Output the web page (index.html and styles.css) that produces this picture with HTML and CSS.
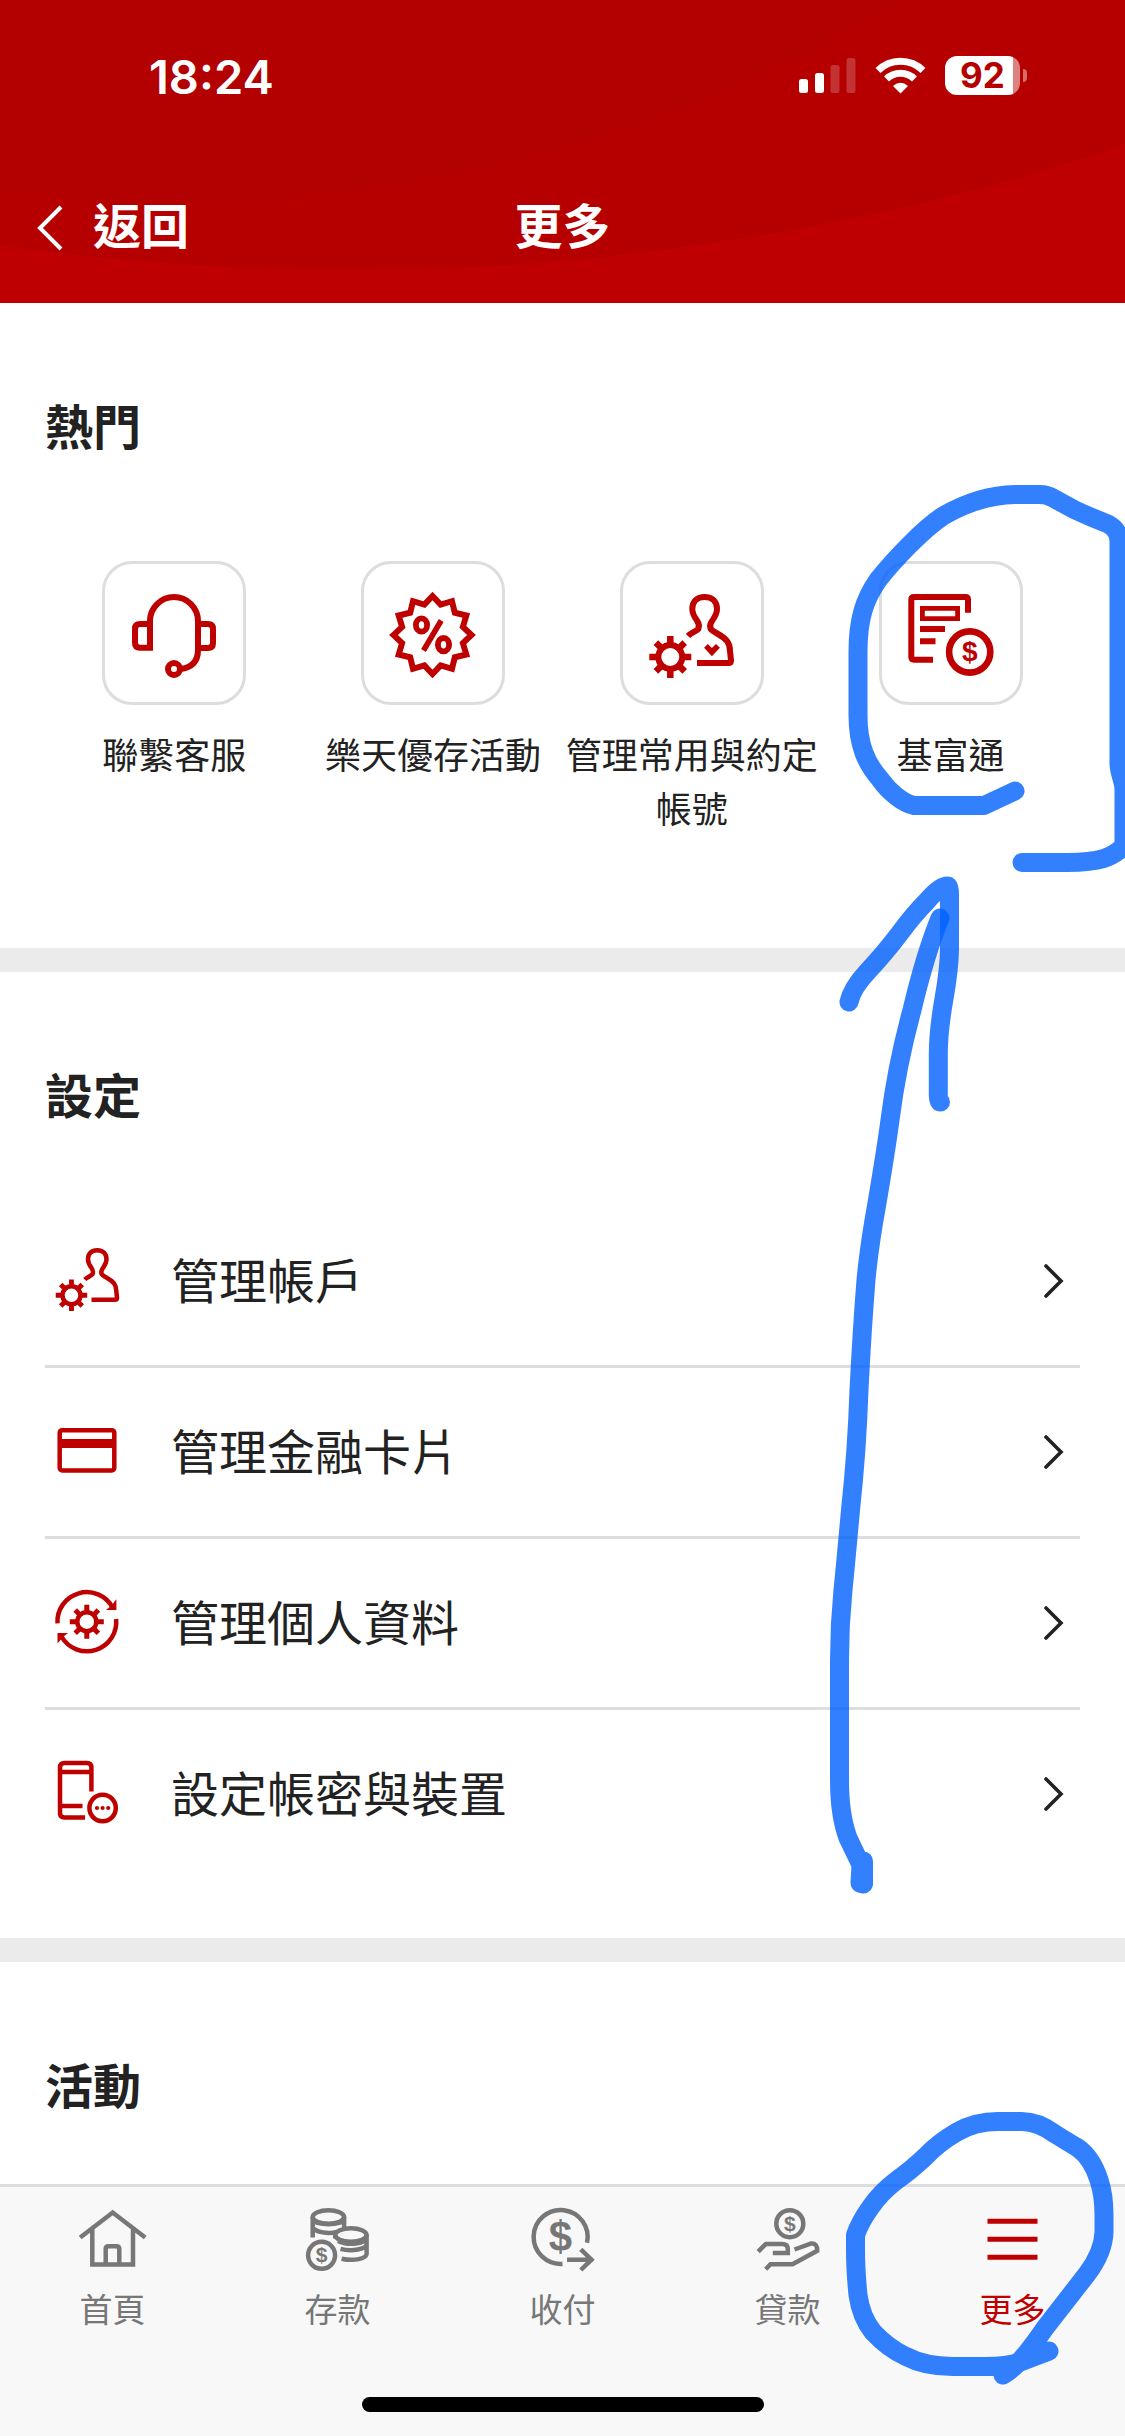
FILE: index.html
```html
<!DOCTYPE html>
<html lang="zh-Hant">
<head>
<meta charset="utf-8">
<title>更多</title>
<link rel="stylesheet" href="styles.css">
</head>
<body>
<svg class="defs" width="0" height="0">
  <symbol id="gear-teeth" viewBox="-22 -22 44 44">
    <path stroke-width="6.500" d="M0-14V-21M0 14V21M-14 0H-21M14 0H21M-9.9-9.9L-14.4-14.4M9.9 9.9L14.4 14.4M-9.9 9.9L-14.4 14.4M9.9-9.9L14.4-14.4"/>
    <circle r="12"/>
  </symbol>
  <symbol id="person-gear" viewBox="0 0 90 92">
    <path d="M41 48C44 45 49 43.500 51.300 41Q53 37 50 32.500C47 28.500 45.300 26 45.300 21C45.300 13.500 50 9 57.600 9S70 13.500 70 21C70 26 68 28.500 65.300 32.500Q62 37 63.700 41C67 45 74 46 80 53Q83 57 83 63L84 72.500Q84 75 81.500 75H50"/>
    <use href="#gear-teeth" x="1.300" y="47" width="44" height="44"/>
  </symbol>
</svg>

<div class="screen">
  <header class="header">
    <svg class="header-bg" viewBox="0 0 1125 303"><circle cx="350" cy="-2195" r="2465" fill="#b60000"/><circle cx="180" cy="-1200" r="1400" fill="#b30000"/></svg>
    <div class="status">
      <span class="time">18:24</span>
      <div class="status-icons">
        <svg width="57" height="36" viewBox="0 0 57 36" fill="#fff"><rect y="22" width="9" height="14" rx="2.500"/><rect x="16" y="16" width="9" height="20" rx="2.500"/><rect x="31.500" y="8" width="9" height="28" rx="2.500" opacity=".2"/><rect x="47.500" y="1" width="9" height="35" rx="2.500" opacity=".2"/></svg>
        <svg width="51" height="37" viewBox="0 0 51 37" fill="none" stroke="#fff" stroke-width="7"><path d="M3 13.500A32 32 0 0 1 48 13.500"/><path d="M11.500 22A20 20 0 0 1 39.500 22"/><path d="M25.500 36.500L18 29Q25.500 22.500 33 29Z" fill="#fff" stroke="none"/></svg>
        <div class="battery"><span class="battery-level">92</span></div>
      </div>
    </div>
    <nav class="nav">
      <a class="back"><svg width="26" height="46" viewBox="0 0 26 46" fill="none" stroke="#fff" stroke-width="4"><path d="M24 2L3 23L24 44"/></svg><span class="nav-text">返回</span></a>
      <h1 class="nav-text">更多</h1>
      <span></span>
    </nav>
  </header>

  <section class="section section-hot">
    <h2 class="title">熱門</h2>
    <div class="grid">
      <a class="tile"><span class="tile-box"><svg class="icon" viewBox="0 0 90 90"><path d="M21 59.800H11Q6 59.800 6 54.800V41Q6 36 11 36H21M21 62.800V33A24 24 0 0 1 69 33V62Q69 79 51 81M69 36H79Q84 36 84 41V55Q84 60 79 60H69"/><circle cx="45" cy="81" r="6"/></svg></span>聯繫客服</a>
      <a class="tile"><span class="tile-box"><svg class="icon" viewBox="-44.500 -47 90 90"><path d="M0-39L8.150-30.400L19.500-33.800L22.300-22.300L33.800-19.500L30.400-8.150L39 0L30.400 8.150L33.800 19.500L22.300 22.300L19.500 33.800L8.150 30.400L0 39L-8.150 30.400L-19.500 33.800L-22.300 22.300L-33.800 19.500L-30.400 8.150L-39 0L-30.400-8.150L-33.800-19.500L-22.300-22.300L-19.500-33.800L-8.150-30.400Z"/><g stroke-width="5.800"><ellipse cx="-11" cy="-10" rx="5.600" ry="6.700"/><ellipse cx="11" cy="9.700" rx="5.600" ry="6.700"/><path d="M8.700-14.500L-9 15.500" stroke-width="5.500"/></g></svg></span>樂天優存活動</a>
      <a class="tile"><span class="tile-box"><svg class="icon" viewBox="0 0 90 90"><use href="#person-gear" width="90" height="92"/><path class="solid" d="M57.100 59.800L60.800 56L64.900 60L69 56L72.900 59.800L64.900 68.300Z"/></svg></span>管理常用與約定帳號</a>
      <a class="tile"><span class="tile-box"><svg class="icon" viewBox="0 0 90 90"><path d="M62 24.700V11.500Q62 9 59.500 9H8Q5.300 9 5.300 11.700V69Q5.300 71.700 8 71.700H27M14 41H39M14 53.300H29.500"/><path d="M16.400 20.400H51.600V30.600H16.400Z" stroke-width="4.800"/><circle cx="63.700" cy="64" r="20.600" stroke-width="6.600"/><text x="63.700" y="73" font-size="28">$</text></svg></span>基富通</a>
    </div>
  </section>

  <section class="section section-settings">
    <h2 class="title">設定</h2>
    <div class="list">
      <a class="row"><svg class="icon" viewBox="-4 2 96 96" stroke-width="6"><use href="#person-gear" width="90" height="92"/></svg><span class="row-text">管理帳戶</span><svg class="chevron" viewBox="0 0 20 34"><path d="M2 2L17 17L2 32"/></svg></a>
      <a class="row"><svg class="icon thin" viewBox="0 0 72 72"><rect x="8.700" y="14.200" width="54.600" height="40.300" rx="2.500"/><path d="M8 27.500H64" stroke-width="9"/></svg><span class="row-text">管理金融卡片</span><svg class="chevron" viewBox="0 0 20 34"><path d="M2 2L17 17L2 32"/></svg></a>
      <a class="row"><svg class="icon thin" viewBox="0 0 72 72"><path d="M6.500 36.300A29.300 29.300 0 0 1 61.500 20.500M65.100 32A29.300 29.300 0 0 1 10.500 49.500"/><path class="solid" d="M65.400 12.300V23H55L60 19ZM6.500 56.500V46H17L12 50Z"/><circle cx="35.800" cy="34.700" r="9.500"/><path stroke-width="5" d="M35.800 17.700V24M35.800 45.500V51.700M18.800 34.700H25M46.500 34.700H52.800M24.200 23.100L29 27.900M42.600 41.500L47.400 46.300M24.200 46.300L29 41.500M42.600 27.900L47.400 23.100"/></svg><span class="row-text">管理個人資料</span><svg class="chevron" viewBox="0 0 20 34"><path d="M2 2L17 17L2 32"/></svg></a>
      <a class="row"><svg class="icon thin" viewBox="0 0 72 72"><path d="M40.400 33.500V9.500Q40.400 5 36 5H13.500Q9 5 9 9.500V55Q9 59.500 13.500 59.500H34M9 14H40M9 48H31.500"/><circle cx="51.600" cy="50" r="13.200"/><g class="solid"><circle cx="46" cy="50" r="2.100"/><circle cx="51.600" cy="50" r="2.100"/><circle cx="57.200" cy="50" r="2.100"/></g></svg><span class="row-text">設定帳密與裝置</span><svg class="chevron" viewBox="0 0 20 34"><path d="M2 2L17 17L2 32"/></svg></a>
    </div>
  </section>

  <section class="section section-events">
    <h2 class="title">活動</h2>
  </section>

  <footer class="tabbar">
    <div class="tabs">
      <a class="tab"><svg class="icon" viewBox="0 0 72 72"><path d="M3.200 33.500L35.700 8.500L68.200 33.500M15.300 25V60.500H56V25M28.700 60V45Q28.700 42.300 31.500 42.300H39.500Q42.300 42.300 42.300 45V60"/></svg>首頁</a>
      <a class="tab"><svg class="icon" viewBox="0 0 72 72"><ellipse cx="26.400" cy="13" rx="15.700" ry="6.800"/><path d="M10.700 13V33.500M42.100 13V23M10.700 15C11 22 42 22 42.100 15M10.700 23.500C14 28.500 26 30 35 28"/><ellipse cx="48.900" cy="31" rx="15.700" ry="6.800"/><path d="M33.200 31V34.500M64.600 31V50C64.600 54.500 52 57.500 39.600 54.700M36 37C46 42 64 40 64.600 33M38.500 44.800C50 48 64.600 45 64.600 40"/><circle cx="19.600" cy="51.300" r="13.500"/><text x="19.600" y="58.400" font-size="21">$</text></svg>存款</a>
      <a class="tab"><svg class="icon" viewBox="0 0 72 72"><path d="M35.500 59.900A27 27 0 1 1 60 38.700M40 55.700H66M53.800 45.300L64.500 55.700L53.800 66"/><text x="33.500" y="47" font-size="42">$</text></svg>收付</a>
      <a class="tab"><svg class="icon" viewBox="0 0 72 72"><circle cx="37.800" cy="19.700" r="13.500"/><text x="37.800" y="26.600" font-size="21">$</text><path d="M6.200 47.700L13.800 40H30Q35.800 40 35.800 45V49H20.800M42.500 45.500L59.200 39.500Q65.500 39 65.200 46.800L40.500 60.300H18.500L13.700 65.300"/></svg>貸款</a>
      <a class="tab active"><svg class="icon" viewBox="0 0 72 72"><path d="M10.500 17.300H60.500M10.500 35.300H60.500M10.500 53.300H60.500" stroke-width="5"/></svg>更多</a>
    </div>
    <div class="home-indicator"></div>
  </footer>

  <svg class="ink" viewBox="0 0 1125 2436">
    <path d="M1015 791L984 805.500H914C903 803 889 792 880 779C866 763 858 745 858 715V652C858 620 864 600 878 580C893 561 922 530 943 516C962 505 985 495 1015 494.500H1040Q1047 494.500 1053 498L1075 510Q1090 517 1108 524Q1119 530 1119 541V763C1119 774 1124 780 1124 790V846C1112 858 1100 862 1067 862.500H1022"/>
    <path d="M849 1002Q852 988 868 971Q884 954 900 933Q914 914 927 901Q940 886 947 886Q949.500 886 949.500 894V949C949 990 938.300 1010 938.300 1054V1095Q938.500 1102 940.500 1102"/>
    <path d="M940 918Q925 955 912 1010Q897 1065 890 1120Q886 1150 877 1203Q869 1247 866 1280Q862 1330 859 1390Q857 1450 850.500 1510Q846 1560 843 1590Q839.500 1625 839.500 1660V1780Q839.500 1815 848 1838L861 1865L860 1883L863.500 1884V1861"/>
    <path d="M1049 2351L1020 2362Q1008 2366.500 985 2366.500H953Q925 2366.500 905 2356Q888 2348 873 2332Q861 2317 858 2295Q855.500 2270 855.500 2250V2235Q860 2222 870 2208Q880 2193 897 2180Q910 2171 925 2157Q938 2143 957 2132Q975 2121.500 998 2121.500H1022Q1038 2121.500 1055 2134Q1068 2142 1078 2148Q1092 2158 1099 2180Q1104 2195 1104 2215V2232Q1103.500 2252 1087 2274L1045 2328Q1030 2350 1018 2363Q1010 2371 1003 2375"/>
  </svg>
</div>
</body>
</html>
```
FILE: styles.css
```css
* { box-sizing: border-box; }
body { margin: 0; font-family: "Noto Sans CJK TC", sans-serif; color: #222; background: #fff; }
h1, h2 { margin: 0; }
.defs { position: absolute; }
.screen { position: relative; width: 1125px; height: 2436px; overflow: hidden; display: flex; flex-direction: column; }

.header { position: relative; height: 303px; background: #bf0000; color: #fff; display: flex; flex-direction: column; flex: none; }
.header-bg { position: absolute; inset: 0; width: 100%; height: 100%; }
.status, .nav { position: relative; }
.status { height: 150px; padding: 0 98px 0 149px; display: flex; justify-content: space-between; align-items: center; }
.time { font: 600 47px/60px Inter, sans-serif; padding-top: 3px; }
.status-icons { display: flex; align-items: center; gap: 19px; }
.battery { display: flex; align-items: center; gap: 3px; }
.battery::after { content: ""; width: 4px; height: 13px; border-radius: 0 4px 4px 0; background: #d86a6a; }
.battery-level { width: 75px; height: 39px; border-radius: 12px; background: linear-gradient(90deg, #fff 68px, #dd8080 68px); color: #b60000; font: 700 35px/39px Inter, sans-serif; text-align: center; }
.nav { height: 153px; display: grid; grid-template-columns: 1fr auto 1fr; align-items: center; padding: 3px 37px 0; }
.back { display: flex; align-items: center; gap: 30px; }
.nav-text { font-size: 48px; line-height: 72px; font-weight: 700; padding-bottom: 10px; }

.section { flex: none; padding: 85px 45px 0; }
.section-hot { height: 669px; border-bottom: 24px solid #ebebeb; }
.section-settings { height: 990px; border-bottom: 24px solid #ebebeb; }
.section-events { height: 222px; }
.title { font-size: 48px; line-height: 72px; font-weight: 700; }

.icon { fill: none; stroke: #bf0000; stroke-width: 6; flex: none; }
.icon .solid { fill: #bf0000; stroke: none; }
.icon text { fill: #bf0000; stroke: none; font-family: "Liberation Sans", sans-serif; font-weight: 700; text-anchor: middle; }

.grid { margin-top: 101px; display: grid; grid-template-columns: repeat(4, 1fr); }
.tile { display: flex; flex-direction: column; align-items: center; gap: 21px; font-size: 36px; line-height: 54px; text-align: center; }
.tile-box { width: 144px; height: 144px; border: 3px solid #ddd; border-radius: 30px; display: grid; place-items: center; }
.tile-box .icon { width: 90px; height: 90px; }

.list { margin-top: 68px; }
.row { height: 171px; display: flex; align-items: center; padding: 0 16px 0 6px; border-bottom: 3px solid #ddd; font-size: 48px; line-height: 72px; }
.row:last-child { border-bottom-color: transparent; }
.row .icon { width: 72px; height: 72px; }
.row .thin { stroke-width: 4.5; }
.row-text { flex: 1; padding: 0 0 6px 48px; }
.chevron { width: 20px; height: 34px; fill: none; stroke: #222; stroke-width: 3.6; stroke-linecap: round; }

.tabbar { flex: none; height: 252px; background: #f8f8f8; border-top: 3px solid #ddd; padding-top: 17px; display: flex; flex-direction: column; align-items: center; }
.tabs { width: 100%; height: 193px; display: grid; grid-template-columns: repeat(5, 1fr); }
.tab { display: flex; flex-direction: column; align-items: center; gap: 8px; color: #777; font-size: 33px; line-height: 48px; }
.tab .icon { width: 72px; height: 72px; stroke: #777; stroke-width: 4.5; }
.tab .icon text { fill: #777; }
.tab.active { color: #bf0000; }
.active .icon { stroke: #bf0000; }
.home-indicator { width: 402px; height: 15px; border-radius: 8px; background: #000; }

/* Freehand marks drawn over the screen */
.ink { position: absolute; inset: 0; width: 1125px; height: 2436px; }
.ink path { fill: none; stroke: #0060ff; stroke-opacity: .8; stroke-width: 19; stroke-linecap: round; stroke-linejoin: round; }
```
